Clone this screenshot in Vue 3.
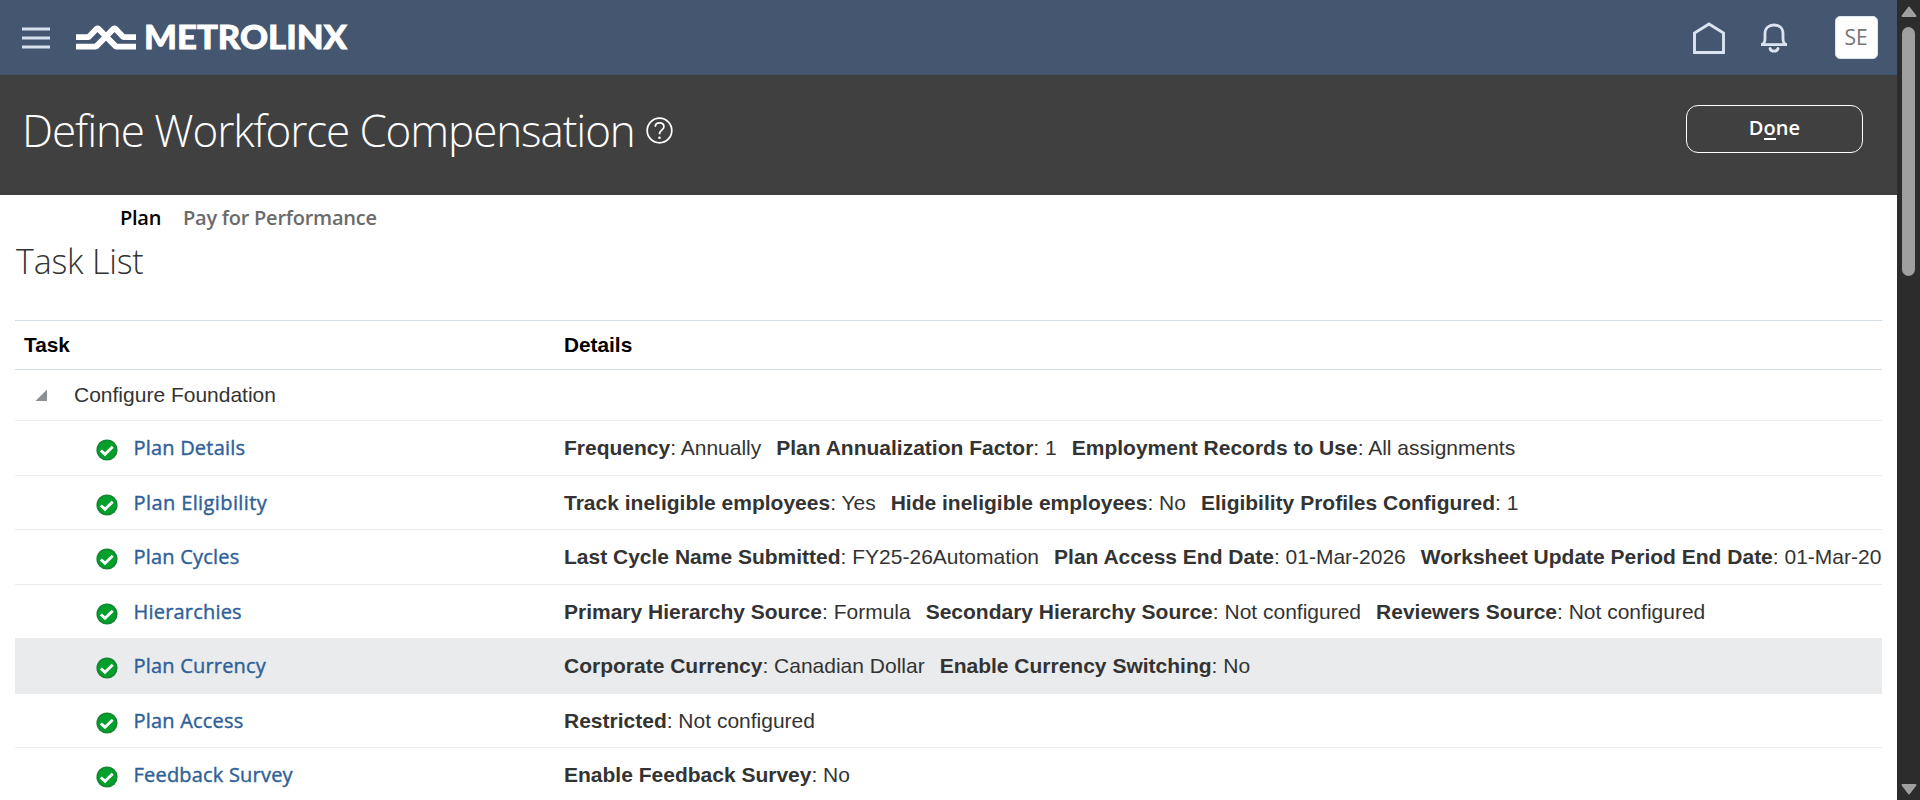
<script setup>
const rows = [
  { name: 'Plan Details', details: [['Frequency', 'Annually'], ['Plan Annualization Factor', '1'], ['Employment Records to Use', 'All assignments']] },
  { name: 'Plan Eligibility', wide: true, details: [['Track ineligible employees', 'Yes'], ['Hide ineligible employees', 'No'], ['Eligibility Profiles Configured', '1']] },
  { name: 'Plan Cycles', details: [['Last Cycle Name Submitted', 'FY25-26Automation'], ['Plan Access End Date', '01-Mar-2026'], ['Worksheet Update Period End Date', '01-Mar-20']] },
  { name: 'Hierarchies', details: [['Primary Hierarchy Source', 'Formula'], ['Secondary Hierarchy Source', 'Not configured'], ['Reviewers Source', 'Not configured']] },
  { name: 'Plan Currency', active: true, details: [['Corporate Currency', 'Canadian Dollar'], ['Enable Currency Switching', 'No']] },
  { name: 'Plan Access', details: [['Restricted', 'Not configured']] },
  { name: 'Feedback Survey', details: [['Enable Feedback Survey', 'No']] }
]
</script>

<template>
  <div class="window">
    <div class="page">
      <header class="global">
        <svg class="burger" width="28" height="22" viewBox="0 0 28 22"><path d="M0 2H28M0 11H28M0 20H28" stroke="#d7e1ee" stroke-width="2.8" /></svg>
        <svg class="logo" width="290" height="54" viewBox="0 -11 290 54">
          <g fill="none" stroke="#fff" stroke-width="5.8" stroke-linejoin="bevel">
            <path d="M0 16.2H12.5L20.8 7.4H22L40 25.6H60" />
            <path d="M60 16.2H47.5L39.2 7.4H38L20 25.6H0" />
          </g>
          <text x="68" y="28.4" textLength="203" lengthAdjust="spacingAndGlyphs">METROLINX</text>
        </svg>
        <div class="tools">
          <svg class="home" width="32" height="33" viewBox="0 0 32 33"><path d="M1.5 30.5V11L16 1.9L30.5 11V30.5Z" fill="none" stroke="#dbe4f0" stroke-width="2.9" /></svg>
          <svg class="bell" width="26" height="31" viewBox="0 0 26 31">
            <g fill="none" stroke="#dbe4f0" stroke-width="2.8">
              <path d="M1.4 23V21.3C3.3 20.5 4 18.5 4 15V10.6C4 5 7.8 2 13 2S22 5 22 10.6V15C22 18.5 22.7 20.5 24.6 21.3V23" />
              <path d="M0 21.6H26" />
              <path d="M9 25.5C9.6 27.6 11 28.2 13 28.2S16.4 27.6 17 25.5" stroke-linecap="round" />
            </g>
          </svg>
          <div class="avatar"><span>SE</span></div>
        </div>
      </header>
      <section class="titlebar">
        <h1>Define Workforce Compensation</h1>
        <svg class="help" width="27" height="27" viewBox="0 0 27 27" fill="none" stroke="#fff">
          <circle cx="13.5" cy="13.5" r="12.3" stroke-width="1.7" />
          <path d="M9.3 9.7C9.3 7.2 11 5.9 13.5 5.9S17.9 7.4 17.9 9.7C17.9 12.9 13.5 13.1 13.5 17.2" stroke-width="1.7" />
          <circle cx="13.5" cy="20.8" r="1.3" fill="#fff" stroke="none" />
        </svg>
        <button class="done"><span>D<i>o</i>ne</span></button>
      </section>
      <main>
        <nav><span class="on">Plan</span><span class="off">Pay for Performance</span></nav>
        <h2>Task List</h2>
        <div class="table">
          <div class="row head"><div class="task">Task</div><div class="details">Details</div></div>
          <div class="row group">
            <svg class="tri" width="13" height="13" viewBox="0 0 13 13"><path d="M12 0.5V12H0.5Z" fill="#8b9095" /></svg>
            <span>Configure Foundation</span>
          </div>
          <div v-for="r in rows" :key="r.name" class="row item" :class="{ active: r.active }">
            <div class="task">
              <svg class="check" width="22" height="22" viewBox="0 0 22 22">
                <circle cx="11" cy="11" r="10.6" fill="#148632" />
                <circle cx="11" cy="11" r="9" fill="#04a02c" />
                <path d="M4.8 11.5L9 15.2L16.7 7.8" fill="none" stroke="#fff" stroke-width="2.9" />
              </svg>
              <a :class="{ wide: r.wide }">{{ r.name }}</a>
            </div>
            <div class="details">
              <span v-for="d in r.details" :key="d[0]" class="pair"><b>{{ d[0] }}</b>: {{ d[1] }}</span>
            </div>
          </div>
        </div>
      </main>
    </div>
    <aside class="scroll">
      <svg width="16" height="12" viewBox="0 0 16 12"><path d="M8 1.5L14.5 10H1.5Z" fill="#a0a0a0" stroke="#a0a0a0" stroke-width="2" stroke-linejoin="round" /></svg>
      <div class="thumb"></div>
      <svg width="16" height="12" viewBox="0 0 16 12"><path d="M8 10.5L14.5 2H1.5Z" fill="#a0a0a0" stroke="#a0a0a0" stroke-width="2" stroke-linejoin="round" /></svg>
    </aside>
  </div>
</template>

<style>
html, body { margin: 0; overflow: hidden; }
</style>

<style scoped>
* { box-sizing: border-box; }
.window { display: flex; width: 1920px; height: 800px; overflow: hidden; background: #fff; font-family: "Liberation Sans", Arial, sans-serif; }
.page { width: 1897px; flex: none; overflow: hidden; }
.global { height: 75px; background: #455670; display: flex; align-items: flex-start; }
.burger { margin: 27px 0 0 22px; }
.logo { margin: 10px 0 0 26px; flex: none; }
.logo text { font: 900 33px Lato, sans-serif; fill: #fff; stroke: #fff; stroke-width: 0.8; }
.tools { margin-left: auto; display: flex; padding-right: 19px; }
.home { margin: 22px 36px 0 0; }
.bell { margin: 23px 48px 0 0; }
.avatar { width: 43px; height: 43px; margin-top: 16px; border-radius: 5px; background: #fff; display: flex; align-items: center; justify-content: center; font: 400 21px/43px "Open Sans", sans-serif; color: #767676; border: 1px solid #dbe4f0; padding-right: 1px; }
.titlebar { height: 120px; background: #404040; display: flex; padding-left: 22px; color: #fff; }
h1 { margin: 22px 0 0; font: 300 44px/66px "Open Sans", sans-serif; letter-spacing: -1.1px; white-space: nowrap; width: 624px; }
.help { margin-top: 42px; }
.done { margin: 30px 34px 0 auto; width: 177px; height: 48px; border: 1px solid #fff; border-radius: 12px; background: none; color: #fff; font: 600 20px/26px "Open Sans", sans-serif; letter-spacing: 0.1px; padding: 0 0 2px; }
.done i { font-style: normal; border-bottom: 2px solid #fff; display: inline-block; line-height: 20px; }
nav { height: 45px; padding-left: 120px; display: flex; gap: 22px; font: 600 20px/46px "Open Sans", sans-serif; letter-spacing: -0.25px; }
.on { color: #000; width: 41px; }
.off { color: #6b6b6b; }
h2 { margin: 0; padding-left: 16px; height: 80px; font: 300 34px/42px "Open Sans", sans-serif; letter-spacing: -0.2px; color: #333; }
.table { margin: 0 15px; border-top: 1px solid #d3dde7; }
.row { display: flex; align-items: center; border-bottom: 1px solid #eaebec; font-size: 21px; color: #333; white-space: nowrap; }
.head { height: 49px; font-weight: 700; font-size: 20.8px; color: #000; border-color: #d3dde7; padding-bottom: 1px; }
.head .task { padding-left: 9px; }
.group { height: 51px; padding-left: 20px; }
.group span { margin-left: 26px; }
.item { height: 55px; }
.item:nth-child(even) { height: 54px; }
.active { background: #eaebec; }
.task { width: 541px; flex: none; display: flex; align-items: center; padding-left: 81px; }
.details { flex: 1; min-width: 0; overflow: hidden; padding-left: 8px; }
.pair { margin-right: 15px; }
.pair:last-child { margin-right: 0; }
.check { margin-top: 4px; }
.task a { margin-left: 15.5px; color: #2e6198; font: 400 20px/28px "Open Sans", sans-serif; letter-spacing: 0.2px; -webkit-text-stroke: 0.4px #2e6198; }
.task a.wide { letter-spacing: 0.4px; }
.scroll { width: 23px; background: #2c2c2c; display: flex; flex-direction: column; align-items: center; padding: 6px 0 5px; }
.thumb { width: 13px; height: 249px; margin: 9px 0 auto; border-radius: 7px; background: #9f9f9f; }
</style>
